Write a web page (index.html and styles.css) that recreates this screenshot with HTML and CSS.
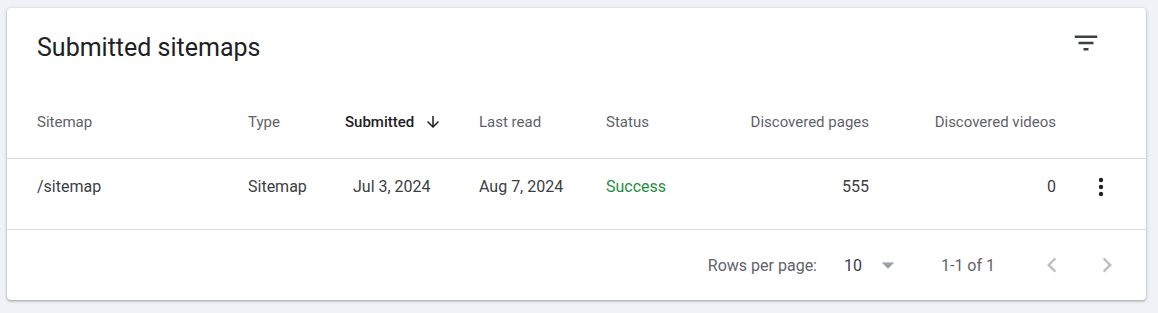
FILE: index.html
```html
<!DOCTYPE html>
<html>
<head>
<meta charset="utf-8">
<link rel="stylesheet" href="styles.css">
</head>
<body>
<div class="card">
  <div class="card-head">
    <h2 class="title">Submitted sitemaps</h2>
    <span class="icon-btn filter">
      <svg width="30" height="30" viewBox="0 0 24 24"><path fill="#3c4043" d="M10 18h4v-2h-4v2zM3 6v2h18V6H3zm3 7h12v-2H6v2z"/></svg>
    </span>
  </div>
  <div class="row head-row">
    <div class="cell">Sitemap</div>
    <div class="cell">Type</div>
    <div class="cell sorted">Submitted
      <svg class="sort" width="18" height="18" viewBox="0 0 24 24"><path fill="#202124" d="M20 12l-1.41-1.41L13 16.17V4h-2v12.17l-5.58-5.59L4 12l8 8 8-8z"/></svg>
    </div>
    <div class="cell">Last read</div>
    <div class="cell">Status</div>
    <div class="cell num">Discovered pages</div>
    <div class="cell num">Discovered videos</div>
    <div class="cell"></div>
  </div>
  <div class="row data-row">
    <div class="cell">/sitemap</div>
    <div class="cell">Sitemap</div>
    <div class="cell date">Jul 3, 2024</div>
    <div class="cell">Aug 7, 2024</div>
    <div class="cell ok">Success</div>
    <div class="cell num">555</div>
    <div class="cell num">0</div>
    <div class="cell menu">
      <svg width="28" height="28" viewBox="0 0 28 28"><circle cx="14" cy="7" r="2.2" fill="#202124"/><circle cx="14" cy="14" r="2.2" fill="#202124"/><circle cx="14" cy="21" r="2.2" fill="#202124"/></svg>
    </div>
  </div>
  <div class="foot">
    <span class="label">Rows per page:</span>
    <span class="rpp">10</span>
    <svg class="drop" width="30" height="30" viewBox="0 0 24 24"><path fill="#9aa0a6" d="M7 10l5 5 5-5z"/></svg>
    <span class="range">1-1 of 1</span>
    <svg class="prev" width="30" height="30" viewBox="0 0 24 24"><path fill="#bdc1c6" d="M15.41 7.41L14 6l-6 6 6 6 1.41-1.41L10.83 12z"/></svg>
    <svg class="next" width="30" height="30" viewBox="0 0 24 24"><path fill="#bdc1c6" d="M10 6L8.59 7.41 13.17 12l-4.58 4.59L10 18l6-6z"/></svg>
  </div>
</div>
</body>
</html>
```
FILE: styles.css
```css
html, body {
  margin: 0;
  background: #f0f2f7;
}
body {
  padding: 8px 12px 13px 7px;
  font-family: Roboto, "Liberation Sans", Arial, sans-serif;
}
.card {
  width: 1139px;
  height: 292px;
  background: #fff;
  border-radius: 4px;
  box-shadow: 0 1px 2px rgba(60, 64, 67, 0.3), 0 1px 3px 1px rgba(60, 64, 67, 0.15);
  box-sizing: border-box;
}
.card-head {
  display: flex;
  justify-content: space-between;
  align-items: flex-start;
  height: 79px;
  padding: 0 45px 0 30px;
}
.title {
  margin: 24px 0 0;
  font-size: 25px;
  line-height: 32px;
  font-weight: 400;
  color: #202124;
}
.icon-btn {
  display: block;
  margin-top: 20px;
  height: 30px;
}
.icon-btn svg { display: block; }
.row {
  display: grid;
  grid-template-columns: 211px 97px 134px 127px 114px 149px 187px 90px;
  padding-left: 30px;
  border-bottom: 1px solid #dadce0;
}
.head-row {
  height: 69px;
  padding-bottom: 2px;
  align-items: center;
  font-size: 15px;
  color: #5f6368;
}
.sorted {
  display: flex;
  align-items: center;
  color: #202124;
  font-weight: 500;
}
.sort {
  margin-left: 10px;
  display: block;
}
.num { text-align: right; }
.data-row {
  height: 70px;
  align-items: start;
  font-size: 16px;
  line-height: 22px;
  color: #3c4043;
}
.data-row .cell { padding-top: 17px; }
.date { padding-left: 8px; }
.ok { color: #1e8e3e; }
.data-row .menu {
  padding-top: 14px;
  display: flex;
  justify-content: center;
}
.menu svg { display: block; }
.foot {
  display: flex;
  justify-content: flex-end;
  align-items: center;
  height: 70px;
  padding-right: 24px;
  font-size: 16px;
  color: #5f6368;
}
.foot svg { display: block; }
.rpp {
  margin-left: 27px;
  color: #3c4043;
}
.drop { margin-left: 11px; }
.range { margin-left: 38px; }
.prev { margin-left: 42px; }
.next { margin-left: 25px; }
```
